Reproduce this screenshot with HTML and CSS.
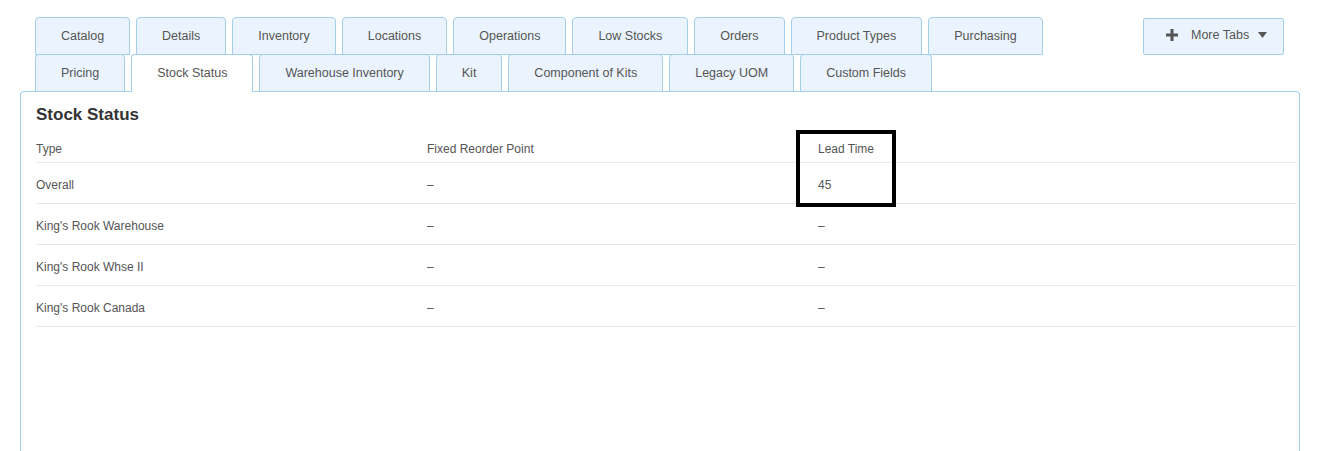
FILE: index.html
```html
<!DOCTYPE html>
<html lang="en">
<head>
  <meta charset="UTF-8">
  <title>Stock Status</title>
  <link rel="stylesheet" href="styles.css">
</head>
<body>
  <div class="page">
    <div class="tabbar">
      <div class="tab-rows">
        <div class="tab-row">
          <a class="tab">Catalog</a>
          <a class="tab">Details</a>
          <a class="tab">Inventory</a>
          <a class="tab">Locations</a>
          <a class="tab">Operations</a>
          <a class="tab">Low Stocks</a>
          <a class="tab">Orders</a>
          <a class="tab">Product Types</a>
          <a class="tab">Purchasing</a>
        </div>
        <div class="tab-row">
          <a class="tab">Pricing</a>
          <a class="tab active">Stock Status</a>
          <a class="tab">Warehouse Inventory</a>
          <a class="tab">Kit</a>
          <a class="tab">Component of Kits</a>
          <a class="tab">Legacy UOM</a>
          <a class="tab">Custom Fields</a>
        </div>
      </div>
      <button class="more-tabs">
        <svg class="plus" width="12" height="12" viewBox="0 0 12 12"><path d="M4.5 0h3v4.5H12v3H7.5V12h-3V7.5H0v-3h4.5z" fill="#555"/></svg>
        <span>More Tabs</span>
        <svg class="caret" width="9" height="6" viewBox="0 0 9 6"><path d="M0 0h9L4.5 6z" fill="#555"/></svg>
      </button>
    </div>

    <div class="panel">
      <h2 class="panel-title">Stock Status</h2>
      <div class="stock-table">
        <div class="row head">
          <div>Type</div>
          <div>Fixed Reorder Point</div>
          <div>Lead Time</div>
        </div>
        <div class="row">
          <div>Overall</div>
          <div>&ndash;</div>
          <div>45</div>
        </div>
        <div class="row">
          <div>King's Rook Warehouse</div>
          <div>&ndash;</div>
          <div>&ndash;</div>
        </div>
        <div class="row">
          <div>King's Rook Whse II</div>
          <div>&ndash;</div>
          <div>&ndash;</div>
        </div>
        <div class="row">
          <div>King's Rook Canada</div>
          <div>&ndash;</div>
          <div>&ndash;</div>
        </div>
        <div class="highlight"></div>
      </div>
    </div>
  </div>
</body>
</html>
```

FILE: styles.css
```css
body {
  margin: 0;
  font-family: "Liberation Sans", Arial, Helvetica, sans-serif;
  color: #555;
  background-color: #fff;
  overflow: hidden;
}
.page {
  padding: 17px 30px 0 20px;
}
.tabbar {
  display: flex;
  justify-content: space-between;
  align-items: flex-start;
  padding: 0 16px 0 15px;
}
.tab-rows {
  display: flex;
  flex-direction: column;
}
.tab-row {
  display: flex;
  gap: 6px;
}
.tab-row + .tab-row {
  margin-top: -1px;
  margin-bottom: -1px;
  position: relative;
  z-index: 1;
}
.tab {
  display: block;
  height: 36px;
  line-height: 36px;
  padding: 0 25px;
  font-size: 12.5px;
  color: #555;
  background-color: #ebf4fe;
  border: 1px solid #a3cfea;
  border-radius: 4px 4px 0 0;
  cursor: pointer;
}
.tab.active {
  background-color: #fff;
  border-bottom-color: #fff;
}
.more-tabs {
  display: flex;
  align-items: center;
  width: 141px;
  height: 37px;
  margin-top: 1px;
  padding: 0 0 4px 22px;
  font-family: inherit;
  font-size: 12.5px;
  color: #555;
  background-color: #ebf4fe;
  border: 1px solid #a3cfea;
  border-radius: 2px;
  cursor: pointer;
}
.more-tabs .plus {
  margin-right: 13px;
}
.more-tabs .caret {
  margin-left: 9px;
}
.panel {
  border: 1px solid #a3cfea;
  border-bottom: none;
  border-radius: 4px 4px 0 0;
  min-height: 346px;
  padding: 13px 2px 0 15px;
}
.panel-title {
  margin: 0;
  font-size: 17px;
  line-height: 20px;
  font-weight: bold;
  color: #333;
}
.stock-table {
  position: relative;
  margin-top: 10px;
  font-size: 12px;
}
.row {
  display: grid;
  grid-template-columns: 391px 391px 1fr;
  height: 37px;
  align-items: center;
  padding-top: 3px;
  border-bottom: 1px solid #e8e8e8;
  box-sizing: content-box;
}
.row.head {
  height: 27px;
  padding-top: 0;
}
.highlight {
  position: absolute;
  left: 760px;
  top: -5px;
  width: 92px;
  height: 69px;
  border: 4px solid #000;
  box-sizing: content-box;
}
```
